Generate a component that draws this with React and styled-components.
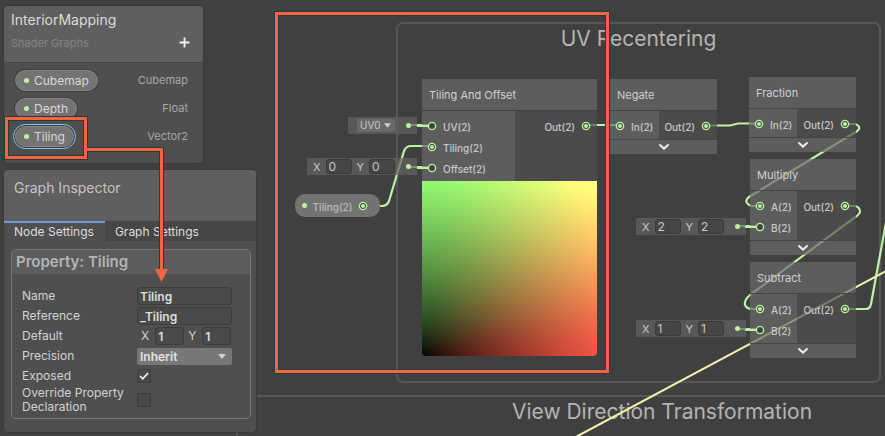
import React, { useEffect, useRef } from "react";
import styled, { createGlobalStyle } from "styled-components";

const wire = "#bdf2a4";
const accent = "#f5633f";
const halo = "#263c3c";

const GlobalStyle = createGlobalStyle`
  * { box-sizing: border-box; }
  body {
    margin: 0;
    background: #404040;
    color: #c8c8c8;
    font-family: Inter, "Liberation Sans", sans-serif;
  }
  input, select, button { font-family: inherit; color: inherit; margin: 0; }
`;

const Page = styled.main`
  position: relative;
  min-height: 100vh;
  overflow: hidden;
`;

const Canvas = styled.section`
  position: absolute;
  inset: 0;
  overflow: hidden;
`;

const Drawing = styled.svg`
  position: absolute;
  left: 0;
  top: 0;
  overflow: visible;
  pointer-events: none;
`;

/* ---------- Graph groups and nodes ---------- */

const Placed = styled.div`
  position: absolute;
  left: ${(p) => p.$x}px;
  top: ${(p) => p.$y}px;
  width: ${(p) => p.$w}px;
`;

const Group = styled(Placed)`
  height: ${(p) => p.$h}px;
  border: 2px solid #575757;
  border-radius: 7px;
`;

const GroupTitle = styled.h2`
  margin: 0;
  padding-top: 1px;
  font-size: 21px;
  line-height: 28px;
  font-weight: 400;
  text-align: center;
  color: #b4b4b4;
`;

const NodeBox = styled(Placed)`
  font-size: 10px;
`;

const NodeHeader = styled.h3`
  margin: 0;
  height: 32px;
  padding: 0 7px;
  display: flex;
  align-items: center;
  font-size: 11px;
  font-weight: 400;
  color: #d0d0d0;
  background: rgba(106, 106, 106, 0.7);
  border-bottom: 1px solid #434343;
`;

const Ports = styled.div`
  display: grid;
  grid-template-columns: ${(p) => p.$inputs}px 1fr;
`;

const PortColumn = styled.div`
  display: flex;
  flex-direction: column;
  padding: 4px 6px 3px 5px;
  background: ${(p) => (p.$out ? "rgba(80, 80, 80, 0.7)" : "rgba(106, 106, 106, 0.7)")};
`;

const Port = styled.div`
  height: 21px;
  display: flex;
  align-items: center;
  gap: 6px;
  justify-content: ${(p) => (p.$out ? "flex-end" : "flex-start")};
`;

const PortLabel = styled.span`
  padding-top: 3px;
  line-height: 14px;
  font-weight: 500;
`;

const SocketIcon = styled.svg`
  flex: none;
  overflow: visible;
`;

const Collapse = styled.button`
  width: 100%;
  height: 15px;
  padding: 0;
  display: flex;
  align-items: center;
  justify-content: center;
  border: 0;
  border-top: 1px solid #434343;
  background: rgba(106, 106, 106, 0.7);
`;

const PreviewCanvas = styled.canvas`
  display: block;
  width: 100%;
  aspect-ratio: 1;
  border-radius: 0 0 4px 4px;
`;

const ValueBox = styled(Placed)`
  height: 17px;
  padding: 0 5px 0 7px;
  display: flex;
  align-items: center;
  justify-content: flex-end;
  background: rgba(98, 98, 98, 0.7);
  font-size: 11px;
`;

const ValueLabel = styled.label`
  display: flex;
  align-items: center;
  gap: 5px;
  margin-right: 5px;
`;

const ValueInput = styled.input`
  width: 26px;
  height: 15px;
  padding: 0 2px;
  border: 1px solid #3a3a3a;
  border-radius: 3px;
  background: #464646;
  font-size: 12px;
`;

const SelectWrap = styled.span`
  position: relative;
  display: flex;
  align-items: center;
  flex: ${(p) => (p.$grow ? "1" : "none")};
`;

const Arrow = styled.svg`
  position: absolute;
  right: ${(p) => p.$right}px;
  pointer-events: none;
`;

const ChannelSelect = styled.select`
  appearance: none;
  width: 38px;
  height: 13px;
  margin-right: 5px;
  padding: 0 3px;
  border: 0;
  border-radius: 2px;
  background: #6a6a6a;
  font-size: 10px;
  line-height: 13px;
`;

const PropertyNode = styled(Placed)`
  height: 23px;
  padding: 0 12px 0 7px;
  display: flex;
  align-items: center;
  justify-content: space-between;
  border-radius: 10px;
  background: #737373;
  font-size: 10px;
  font-weight: 500;
`;

const PropertyLabel = styled.span`
  padding-top: 3px;
  color: #bcbcbc;
`;

const Dot = styled.span`
  flex: none;
  width: 5px;
  height: 5px;
  border-radius: 50%;
  background: ${wire};
`;

const LeadDot = styled(Dot)`
  margin-left: 6px;
  margin-right: 1px;
`;

/* ---------- Side panels ---------- */

const Sidebar = styled.aside`
  position: relative;
  width: 252px;
  margin: 6px 4px;
  display: flex;
  flex-direction: column;
  align-items: flex-start;
  gap: 7px;
`;

const Panel = styled.section`
  width: ${(p) => p.$w}px;
  background: #4f4f4f;
  border-radius: 4px;
  overflow: hidden;
  box-shadow: 0 0 0 1px #3a3a3a;
`;

const BoardHeader = styled.header`
  display: flex;
  justify-content: space-between;
  align-items: flex-end;
  height: 57px;
  padding: 7px 13px 11px 7px;
  background: #5f5f5f;
  border-bottom: 1px solid #454545;
`;

const BoardTitle = styled.h1`
  margin: 0;
  font-size: 14px;
  line-height: 18px;
  font-weight: 400;
  color: #dcdcdc;
`;

const BoardSubtitle = styled.p`
  margin: 6px 0 0;
  font-size: 11px;
  line-height: 16px;
  color: #848484;
`;

const AddButton = styled.button`
  display: flex;
  padding: 0;
  margin-bottom: 3px;
  border: 0;
  background: none;
`;

const PropertyList = styled.ul`
  margin: 0;
  padding: 3px 15px 13px 11px;
  list-style: none;
`;

const PropertyRow = styled.li`
  height: 28px;
  display: flex;
  align-items: center;
  justify-content: space-between;
  font-size: 11px;
  color: #a8a8a8;
`;

const Pill = styled.button`
  height: 21px;
  padding: 0 8px;
  display: flex;
  align-items: center;
  gap: 5px;
  border: 1px solid #858585;
  border-radius: 11px;
  background: #737373;
  color: #d8d8d8;
  font-size: 12px;
  box-shadow: 0 0 0 1px #404040;
  outline: ${(p) => (p.$selected ? "1px solid #7cc4f0" : "none")};
  outline-offset: 1px;
`;

const InspectorTitle = styled.h2`
  margin: 0;
  height: 51px;
  padding: 9px 10px;
  background: #5f5f5f;
  font-size: 14px;
  line-height: 18px;
  font-weight: 400;
  color: #c4c4c4;
`;

const Tabs = styled.div`
  display: flex;
  background: #464646;
`;

const Tab = styled.button`
  height: 20px;
  padding: 0 11px 0 10px;
  border: 0;
  border-top: 2px solid ${(p) => (p.$active ? "#6a9bd2" : "transparent")};
  background: ${(p) => (p.$active ? "#4f4f4f" : "transparent")};
  color: #dcdcdc;
  font-size: 12px;
  line-height: 16px;
`;

const PropertyCard = styled.form`
  margin: 8px 5px 13px 7px;
  border: 1px solid #777;
  border-radius: 5px;
  overflow: hidden;
`;

const CardTitle = styled.h3`
  margin: 0 0 12px;
  padding: 3px 4px;
  background: #5c5c5c;
  font-size: 15px;
  line-height: 18px;
  font-weight: 600;
  color: #b4b4b4;
`;

const Fields = styled.div`
  padding-bottom: 4px;
`;

const Field = styled.div`
  min-height: 20px;
  padding: 0 18px 0 10px;
  display: grid;
  grid-template-columns: 115px 1fr;
  align-items: center;
  font-size: 12px;
  line-height: 14px;
  color: #d2d2d2;
`;

const TextInput = styled.input`
  width: ${(p) => (p.$small ? "29px" : "100%")};
  height: 18px;
  padding: 0 2px;
  border: 1px solid #3c3c3c;
  border-radius: 3px;
  background: #4a4a4a;
  color: #dedede;
  font-size: 12px;
  font-weight: 600;
`;

const Vector = styled.div`
  display: flex;
  gap: 4px;
  padding-left: 4px;
`;

const Axis = styled.label`
  display: flex;
  align-items: center;
  gap: 6px;
`;

const PrecisionSelect = styled.select`
  appearance: none;
  width: 100%;
  height: 17px;
  padding: 0 3px;
  border: 0;
  border-radius: 2px;
  background: #777;
  color: #e4e4e4;
  font-size: 12px;
  font-weight: 600;
`;

const Checkbox = styled.input`
  appearance: none;
  width: 14px;
  height: 14px;
  border: 1px solid #3c3c3c;
  border-radius: 2px;
  background: #4a4a4a;
`;

const CheckWrap = styled.span`
  position: relative;
  display: flex;
`;

const Tick = styled.svg`
  position: absolute;
  left: 1px;
  top: 1px;
  pointer-events: none;
`;

/* ---------- Callouts ---------- */

const Callout = styled(Placed)`
  height: ${(p) => p.$h}px;
  border: 3px solid ${accent};
  box-shadow: 0 0 0 1px ${halo}, inset 0 0 0 1px ${halo};
  pointer-events: none;
`;

function Socket({ open }) {
  return (
    <SocketIcon width="10" height="10" viewBox="0 0 10 10">
      {open && <path d="M-10 5H2" stroke={wire} strokeWidth="2" />}
      <circle cx="5" cy="5" r="3.6" fill="#3c4638" stroke={wire} strokeWidth="1.4" />
      {!open && <circle cx="5" cy="5" r="2" fill={wire} />}
    </SocketIcon>
  );
}

function Triangle({ right, size = 8 }) {
  return (
    <Arrow $right={right} width={size} height="5" viewBox="0 0 8 5">
      <path d="M0 0H8L4 5Z" fill="#cfcfcf" />
    </Arrow>
  );
}

function UvPreview() {
  const ref = useRef(null);
  useEffect(() => {
    const size = 175;
    const ctx = ref.current.getContext("2d");
    const image = ctx.createImageData(size, size);
    const encode = (v) => 255 * Math.min(1, v) ** (1 / 2.2);
    for (let row = 0; row < size; row++) {
      for (let col = 0; col < size; col++) {
        const u = (col / (size - 1)) ** 1.65;
        const v = (1 - row / (size - 1)) ** 1.65;
        const i = (row * size + col) * 4;
        image.data[i] = encode(0.88 * u + 0.29 * v);
        image.data[i + 1] = encode(0.09 * u + 0.96 * v);
        image.data[i + 2] = encode(0.055 * u + 0.165 * v);
        image.data[i + 3] = 255;
      }
    }
    ctx.putImageData(image, 0, 0);
  }, []);
  return <PreviewCanvas ref={ref} width="175" height="175" />;
}

function GraphNode({ title, x, y, w, split, inputs, preview }) {
  return (
    <NodeBox as="article" $x={x} $y={y} $w={w}>
      <NodeHeader>{title}</NodeHeader>
      <Ports $inputs={split}>
        <PortColumn>
          {inputs.map(([label, open]) => (
            <Port key={label}>
              <Socket open={open} />
              <PortLabel>{label}</PortLabel>
            </Port>
          ))}
        </PortColumn>
        <PortColumn $out>
          <Port $out>
            <PortLabel>Out(2)</PortLabel>
            <Socket />
          </Port>
        </PortColumn>
      </Ports>
      {preview ? (
        <UvPreview />
      ) : (
        <Collapse aria-label={`Collapse ${title}`}>
          <svg width="12" height="8" viewBox="0 0 12 8">
            <path d="M2 2L6 5.6L10 2" fill="none" stroke="#ececec" strokeWidth="2" strokeLinecap="round" />
          </svg>
        </Collapse>
      )}
    </NodeBox>
  );
}

function VectorBox({ x, y, value, name }) {
  return (
    <ValueBox $x={x} $y={y} $w={110}>
      <ValueLabel>X<ValueInput aria-label={`${name} X`} defaultValue={value} /></ValueLabel>
      <ValueLabel>Y<ValueInput aria-label={`${name} Y`} defaultValue={value} /></ValueLabel>
      <LeadDot />
    </ValueBox>
  );
}

function Wires() {
  return (
    <Drawing width="885" height="436" fill="none">
      <g stroke={wire} strokeWidth="2.2" strokeLinejoin="round">
        <path d="M409 125H432M409 167H432M737 226H760M737 329H760" />
        <path d="M362 206H382Q387 206 389 201L404 151Q406 146 411 146H432" />
        <path d="M586 125H620" />
        <path d="M706 125.500H730L738 123.500H759" />
        <path d="M845 124H854Q860 125 859 129Q858 131 854 133L749 197Q745 200 747 203Q749 206 753 206H760" />
        <path d="M845 206H855Q860 207 860 212Q859 215 854 218L750 295Q744 300 745 305Q747 309 752 309H760" />
        <path d="M845 309H866Q870 309 871 304L887 217" />
      </g>
      <path d="M574 438L890 269" stroke="#f2f3ad" strokeWidth="2" />
    </Drawing>
  );
}

function Blackboard() {
  const items = [["Cubemap", "Cubemap"], ["Depth", "Float"], ["Tiling", "Vector2"]];
  return (
    <Panel $w={199}>
      <BoardHeader>
        <div>
          <BoardTitle>InteriorMapping</BoardTitle>
          <BoardSubtitle>Shader Graphs</BoardSubtitle>
        </div>
        <AddButton aria-label="Add property">
          <svg width="11" height="11" viewBox="0 0 11 11">
            <path d="M5.500 0.500V10.500M0.500 5.500H10.500" stroke="#f4f4f4" strokeWidth="1.8" />
          </svg>
        </AddButton>
      </BoardHeader>
      <PropertyList>
        {items.map(([name, type]) => (
          <PropertyRow key={name}>
            <Pill $selected={name === "Tiling"}><Dot />{name}</Pill>
            <span>{type}</span>
          </PropertyRow>
        ))}
      </PropertyList>
    </Panel>
  );
}

function Inspector() {
  return (
    <Panel $w={252}>
      <InspectorTitle>Graph Inspector</InspectorTitle>
      <Tabs role="tablist">
        <Tab role="tab" aria-selected="true" $active>Node Settings</Tab>
        <Tab role="tab" aria-selected="false">Graph Settings</Tab>
      </Tabs>
      <PropertyCard>
        <CardTitle>Property: Tiling</CardTitle>
        <Fields>
          <Field>
            <label htmlFor="name">Name</label>
            <TextInput id="name" defaultValue="Tiling" />
          </Field>
          <Field>
            <label htmlFor="reference">Reference</label>
            <TextInput id="reference" defaultValue="_Tiling" />
          </Field>
          <Field>
            <span>Default</span>
            <Vector>
              <Axis>X<TextInput $small defaultValue="1" /></Axis>
              <Axis>Y<TextInput $small defaultValue="1" /></Axis>
            </Vector>
          </Field>
          <Field>
            <label htmlFor="precision">Precision</label>
            <SelectWrap $grow>
              <PrecisionSelect id="precision"><option>Inherit</option></PrecisionSelect>
              <Triangle right={6} />
            </SelectWrap>
          </Field>
          <Field>
            <label htmlFor="exposed">Exposed</label>
            <CheckWrap>
              <Checkbox id="exposed" type="checkbox" defaultChecked />
              <Tick width="12" height="12" viewBox="0 0 12 12">
                <path d="M2 6L4.800 8.800L10 3" fill="none" stroke="#f0f0f0" strokeWidth="1.700" />
              </Tick>
            </CheckWrap>
          </Field>
          <Field>
            <label htmlFor="override">Override Property Declaration</label>
            <CheckWrap><Checkbox id="override" type="checkbox" /></CheckWrap>
          </Field>
        </Fields>
      </PropertyCard>
    </Panel>
  );
}

export default function App() {
  return (
    <Page>
      <GlobalStyle />
      <Canvas>
        <Group $x={396} $y={22} $w={485} $h={361}><GroupTitle>UV Recentering</GroupTitle></Group>
        <Group $x={236} $y={395} $w={852} $h={300}><GroupTitle>View Direction Transformation</GroupTitle></Group>
        <Wires />
        <ValueBox $x={348} $y={117} $w={69}>
          <SelectWrap>
            <ChannelSelect aria-label="UV channel"><option>UV0</option></ChannelSelect>
            <Triangle right={9} size={7} />
          </SelectWrap>
          <LeadDot />
        </ValueBox>
        <VectorBox x={307} y={158} value="0" name="Offset" />
        <VectorBox x={636} y={218} value="2" name="Multiply" />
        <VectorBox x={636} y={320} value="1" name="Subtract" />
        <PropertyNode $x={295} $y={194} $w={85}>
          <Dot /><PropertyLabel>Tiling(2)</PropertyLabel><Socket />
        </PropertyNode>
        <GraphNode title="Tiling And Offset" x={422} y={79} w={175} split={93} preview
          inputs={[["UV(2)", true], ["Tiling(2)", false], ["Offset(2)", true]]} />
        <GraphNode title="Negate" x={610} y={79} w={107} split={49} inputs={[["In(2)", false]]} />
        <GraphNode title="Fraction" x={749} y={77} w={107} split={48} inputs={[["In(2)", false]]} />
        <GraphNode title="Multiply" x={750} y={159} w={106} split={47} inputs={[["A(2)", false], ["B(2)", true]]} />
        <GraphNode title="Subtract" x={750} y={262} w={106} split={47} inputs={[["A(2)", false], ["B(2)", true]]} />
      </Canvas>
      <Sidebar>
        <Blackboard />
        <Inspector />
      </Sidebar>
      <Callout $x={275} $y={12} $w={334} $h={361} />
      <Callout $x={5} $y={117} $w={82} $h={42} />
      <Drawing width="885" height="436">
        <path d="M88 149.500H161.500V270" fill="none" stroke={halo} strokeWidth="5" />
        <path d="M86 149.500H161.500V270" fill="none" stroke={accent} strokeWidth="3" />
        <path d="M155 269H168L161.500 282Z" fill={accent} />
      </Drawing>
    </Page>
  );
}
